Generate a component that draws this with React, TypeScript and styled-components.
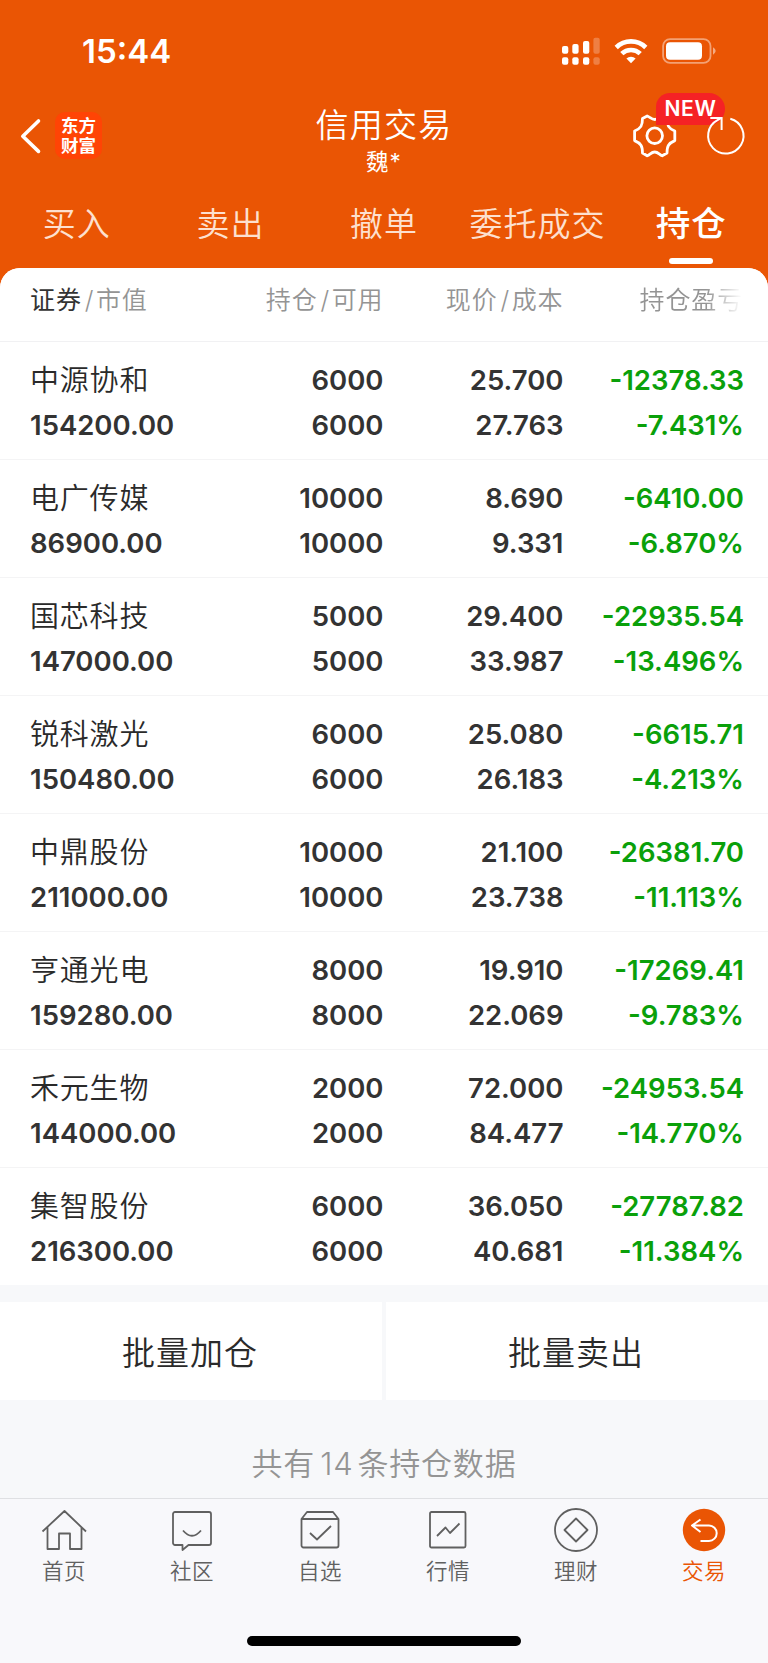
import React from 'react';
import styled, { createGlobalStyle } from 'styled-components';

const ORANGE = '#ea5504';

const GlobalStyle = createGlobalStyle`
  * { box-sizing: border-box; }
  body {
    margin: 0;
    background: #f7f8fa;
    font-family: Inter, 'Noto Sans CJK SC', sans-serif;
    color: #333;
  }
`;

const Screen = styled.div`
  width: 768px;
  height: 1663px;
  display: flex;
  flex-direction: column;
  overflow: hidden;
  background: ${ORANGE};
`;

const StatusBar = styled.div`
  height: 96px;
  flex: none;
  display: flex;
  justify-content: space-between;
  padding: 31px 50px 0 82px;
`;

const Time = styled.div`
  font-size: 33px;
  font-weight: 600;
  line-height: 41px;
  color: #fff;
`;

const StatusIcons = styled.svg`
  display: block;
  width: 158px;
  height: 40px;
`;

const TitleBar = styled.div`
  height: 94px;
  flex: none;
  display: grid;
  grid-template-columns: 240px 1fr 240px;
`;

const Brand = styled.div`
  display: flex;
  align-items: flex-start;
  padding: 16px 0 0 20px;
`;

const BackIcon = styled.svg`
  width: 22px;
  height: 38px;
  margin-top: 5px;
`;

const Logo = styled.div`
  width: 47px;
  height: 47px;
  margin-left: 13px;
  border-radius: 10px;
  background: #ff4405;
  color: #fff;
  font-size: 17.5px;
  font-weight: 700;
  line-height: 20px;
  text-align: center;
  padding-top: 4px;
`;

const TitleText = styled.div`
  text-align: center;
  color: #fff;
`;

const Title = styled.div`
  font-size: 33px;
  font-weight: 350;
  letter-spacing: 1.2px;
  line-height: 44px;
  padding-top: 7px;
`;

const Account = styled.div`
  font-size: 22.5px;
  line-height: 30px;
  letter-spacing: 1px;
`;

const Actions = styled.div`
  position: relative;
`;

const ActionIcons = styled.svg`
  display: block;
  width: 240px;
  height: 94px;
`;

const RefreshIcon = styled(ActionIcons)`
  position: absolute;
  left: 0;
  top: 0;
`;

const NewBadge = styled.span`
  position: absolute;
  left: 128px;
  top: -3px;
  width: 69px;
  height: 32px;
  border-radius: 14px 16px 16px 0;
  background: #f52225;
  color: #fff;
  font-size: 21px;
  font-weight: 600;
  line-height: 32px;
  letter-spacing: 0.6px;
  text-align: center;
`;

const Tabs = styled.div`
  height: 78px;
  flex: none;
  display: grid;
  grid-template-columns: repeat(5, 1fr);
`;

const Tab = styled.div<{ $active?: boolean }>`
  display: flex;
  flex-direction: column;
  align-items: center;
  padding-top: 12px;
  font-size: ${(p) => (p.$active ? '34.5px' : '33px')};
  line-height: 44px;
  letter-spacing: 1px;
  font-weight: ${(p) => (p.$active ? 500 : 350)};
  color: ${(p) => (p.$active ? '#fff' : '#fde0cf')};
  &::after {
    content: '';
    width: 44px;
    height: 6px;
    margin-top: 12px;
    border-radius: 3px;
    background: ${(p) => (p.$active ? '#fff' : 'transparent')};
  }
`;

const Sheet = styled.div`
  flex: 1;
  display: flex;
  flex-direction: column;
  border-radius: 20px 20px 0 0;
  background: #f7f8fa;
  overflow: hidden;
`;

const columns = `
  display: grid;
  grid-template-columns: 175px 178.500px 180px 180.500px;
  padding-left: 30px;
  background: #fff;
`;

const HeadRow = styled.div`
  ${columns}
  height: 74px;
  flex: none;
  padding-top: 14px;
  border-bottom: 1px solid #f1f1f3;
  font-size: 25px;
  font-weight: 350;
  line-height: 36px;
  letter-spacing: 0.9px;
  color: #949494;
`;

const HeadCell = styled.div<{ $align?: 'right' }>`
  text-align: ${(p) => p.$align ?? 'left'};
  white-space: nowrap;
`;

const HeadStrong = styled.span`
  color: #333;
  font-weight: 400;
`;

const Slash = styled.span`
  margin: 0 1.5px 0 3px;
`;

const FadedHead = styled(HeadCell)`
  padding-left: 76px;
  overflow: hidden;
  mask-image: linear-gradient(to right, #000 142px, transparent 178px);
`;

const Row = styled.div`
  ${columns}
  height: 118px;
  flex: none;
  padding-top: 15px;
  border-bottom: 1px solid #f4f4f5;
  &:last-child {
    height: 117px;
    border-bottom: 0;
  }
`;

const Cell = styled.div<{ $tone?: 'loss' }>`
  padding-top: 1px;
  text-align: right;
  font-size: 27.5px;
  font-weight: 600;
  line-height: 45px;
  color: ${(p) => (p.$tone === 'loss' ? '#0aa00a' : '#333')};
`;

const NameCell = styled(Cell)`
  text-align: left;
`;

const StockName = styled.div`
  font-size: 29px;
  font-weight: 350;
  letter-spacing: 0.8px;
  line-height: 45px;
  color: #2a2a2a;
`;

const BatchBar = styled.div`
  display: grid;
  grid-template-columns: 1fr 1fr;
  gap: 4px;
  margin-top: 17px;
  height: 98px;
  flex: none;
`;

const BatchButton = styled.button`
  border: 0;
  padding: 0 2px 0 0;
  background: #fff;
  color: #2a2a2a;
  font: inherit;
  font-size: 33px;
  font-weight: 350;
  letter-spacing: 1px;
`;

const Summary = styled.div`
  flex: 1;
  padding-top: 41px;
  text-align: center;
  font-size: 31px;
  font-weight: 350;
  line-height: 46px;
  letter-spacing: 0.8px;
  color: #949494;
`;

const Count = styled.span`
  margin: 0 4px 0 5px;
`;

const NavBar = styled.nav`
  height: 165px;
  flex: none;
  border-top: 1px solid #dfe0e3;
  background: #f8f8fb;
`;

const NavItems = styled.div`
  height: 137px;
  display: grid;
  grid-template-columns: repeat(6, 1fr);
`;

const NavItem = styled.div<{ $active?: boolean }>`
  display: flex;
  flex-direction: column;
  align-items: center;
  padding-top: 8px;
  font-size: 21.5px;
  font-weight: 350;
  letter-spacing: 0.6px;
  line-height: 32px;
  color: ${(p) => (p.$active ? ORANGE : '#606060')};
`;

const NavIcon = styled.svg`
  width: 46px;
  height: 46px;
  margin-bottom: 2px;
  fill: none;
  stroke: currentColor;
  stroke-width: 1.8;
  stroke-linejoin: round;
`;

const HomeIndicator = styled.div`
  width: 274px;
  height: 10px;
  margin: 0 auto;
  border-radius: 5px;
  background: #000;
`;

const holdings = [
  ['中源协和', '154200.00', '6000', '25.700', '27.763', '-12378.33', '-7.431%'],
  ['电广传媒', '86900.00', '10000', '8.690', '9.331', '-6410.00', '-6.870%'],
  ['国芯科技', '147000.00', '5000', '29.400', '33.987', '-22935.54', '-13.496%'],
  ['锐科激光', '150480.00', '6000', '25.080', '26.183', '-6615.71', '-4.213%'],
  ['中鼎股份', '211000.00', '10000', '21.100', '23.738', '-26381.70', '-11.113%'],
  ['亨通光电', '159280.00', '8000', '19.910', '22.069', '-17269.41', '-9.783%'],
  ['禾元生物', '144000.00', '2000', '72.000', '84.477', '-24953.54', '-14.770%'],
  ['集智股份', '216300.00', '6000', '36.050', '40.681', '-27787.82', '-11.384%'],
];

const navItems = [
  {
    label: '首页',
    icon: <path d="M1.500 24.500 23.500 4 45 24.500M6.500 20.500V42H18V26.500h11V42h11.500V20.500" />,
  },
  {
    label: '社区',
    icon: (
      <>
        <path d="M6 5h34a2 2 0 0 1 2 2v29a2 2 0 0 1-2 2H19.500L13.500 43V38H6a2 2 0 0 1-2-2V7a2 2 0 0 1 2-2Z" />
        <path d="M14 23.500q9 10.500 18 0" />
      </>
    ),
  },
  {
    label: '自选',
    icon: (
      <>
        <path d="M4.500 12 10 5h26l5.500 7v26.500a2 2 0 0 1-2 2h-33a2 2 0 0 1-2-2ZM4.500 12h37" />
        <path d="m13 26 7 6.500L34 19" />
      </>
    ),
  },
  {
    label: '行情',
    icon: (
      <>
        <rect x="5" y="5" width="35.500" height="35.500" rx="1.500" />
        <path d="m12 29 8.500-8.500 4.500 5.500 9.500-9.500" />
      </>
    ),
  },
  {
    label: '理财',
    icon: (
      <>
        <circle cx="23" cy="23" r="21" />
        <path d="M23 11.500 34.500 23 23 34.500 11.500 23Z" />
      </>
    ),
  },
  {
    label: '交易',
    active: true,
    icon: (
      <>
        <circle cx="23" cy="23" r="21.200" fill={ORANGE} stroke="none" />
        <path d="M19.500 12.500l-8.500 6 8.500 6.500M11 18.500H28a7.700 7.700 0 0 1 0 15.400h-8.500" stroke="#fff" strokeWidth="2" />
      </>
    ),
  },
];

function StatusGlyphs() {
  return (
    <StatusIcons viewBox="560 31 158 40" fill="#fff">
      <rect x="562" y="46" width="6.300" height="7.700" rx="2" />
      <rect x="572.300" y="44" width="6.300" height="9.700" rx="2" />
      <rect x="583" y="41" width="6.300" height="12.700" rx="2" />
      <rect x="593.400" y="37.700" width="6.300" height="16" rx="2" opacity="0.25" />
      <rect x="562" y="57.300" width="6.300" height="7.400" rx="2" />
      <rect x="572.300" y="57.300" width="6.300" height="7.400" rx="2" />
      <rect x="583" y="57.300" width="6.300" height="7.400" rx="2" />
      <rect x="593.400" y="57.300" width="6.300" height="7.400" rx="2" opacity="0.25" />
      <g fill="none" stroke="#fff" strokeWidth="4.600">
        <path d="M616.200 47.500a21 21 0 0 1 29.600 0" />
        <path d="M621.800 53.700a13.200 13.200 0 0 1 18.400 0" />
      </g>
      <path d="M631 63.200l-4.600-4.700a6.600 6.600 0 0 1 9.200 0Z" />
      <rect x="663.100" y="39.100" width="47.400" height="23.800" rx="7" fill="none" stroke="#fff" strokeWidth="1.800" opacity="0.450" />
      <rect x="666" y="42.300" width="36" height="17.400" rx="4" />
      <path d="M713 47.300q5.400 3.700 0 7.400Z" opacity="0.500" />
    </StatusIcons>
  );
}

export default function App() {
  return (
    <>
      <GlobalStyle />
      <Screen>
        <StatusBar>
          <Time>15:44</Time>
          <StatusGlyphs />
        </StatusBar>
        <TitleBar>
          <Brand>
            <BackIcon viewBox="0 0 22 38" fill="none" stroke="#fff" strokeWidth="3.600" strokeLinecap="round" strokeLinejoin="round">
              <path d="M18.500 4 2.800 19.200 18.500 34.400" />
            </BackIcon>
            <Logo>
              东方
              <br />
              财富
            </Logo>
          </Brand>
          <TitleText>
            <Title>信用交易</Title>
            <Account>魏*</Account>
          </TitleText>
          <Actions>
            <ActionIcons viewBox="528 96 240 94" fill="none" stroke="#fff" strokeWidth="2.800" strokeLinejoin="round">
              <path d="M654.700 119.500C651.500 119.500 650 117 647.200 116L642.500 118.600C642.500 125.500 641 128.300 634.600 131V140.600C641 143.300 642.500 146 642.500 153L647.200 155.800C650 154.500 651.500 152 654.700 152C658 152 659.400 154.500 662.200 155.800L667 153C667 146 668.400 143.300 674.800 140.600V131C668.400 128.300 667 125.500 667 118.600L662.200 116C659.400 117 658 119.500 654.700 119.500Z" />
              <circle cx="654.700" cy="135.700" r="7.800" />
            </ActionIcons>
            <NewBadge>NEW</NewBadge>
            <RefreshIcon viewBox="528 96 240 94" fill="none" stroke="#fff" strokeWidth="2">
              <path d="M730.300 118.700a17.700 17.700 0 1 1-12.800 1.500l3.500-2" />
              <path d="M710.300 118h11.300v12" />
            </RefreshIcon>
          </Actions>
        </TitleBar>
        <Tabs>
          {['买入', '卖出', '撤单', '委托成交', '持仓'].map((t) => (
            <Tab key={t} $active={t === '持仓'}>
              {t}
            </Tab>
          ))}
        </Tabs>
        <Sheet>
          <HeadRow>
            <HeadCell>
              <HeadStrong>证券</HeadStrong>
              <Slash>/</Slash>市值
            </HeadCell>
            <HeadCell $align="right">
              持仓<Slash>/</Slash>可用
            </HeadCell>
            <HeadCell $align="right">
              现价<Slash>/</Slash>成本
            </HeadCell>
            <FadedHead>持仓盈亏</FadedHead>
          </HeadRow>
          <div>
            {holdings.map(([name, value, qty, price, cost, pl, pct]) => (
              <Row key={name}>
                <NameCell>
                  <StockName>{name}</StockName>
                  {value}
                </NameCell>
                <Cell>
                  <div>{qty}</div>
                  <div>{qty}</div>
                </Cell>
                <Cell>
                  <div>{price}</div>
                  <div>{cost}</div>
                </Cell>
                <Cell $tone="loss">
                  <div>{pl}</div>
                  <div>{pct}</div>
                </Cell>
              </Row>
            ))}
          </div>
          <BatchBar>
            <BatchButton>批量加仓</BatchButton>
            <BatchButton>批量卖出</BatchButton>
          </BatchBar>
          <Summary>
            共有<Count>14</Count>条持仓数据
          </Summary>
          <NavBar>
            <NavItems>
              {navItems.map((n) => (
                <NavItem key={n.label} $active={n.active}>
                  <NavIcon viewBox="0 0 46 46">{n.icon}</NavIcon>
                  {n.label}
                </NavItem>
              ))}
            </NavItems>
            <HomeIndicator />
          </NavBar>
        </Sheet>
      </Screen>
    </>
  );
}
